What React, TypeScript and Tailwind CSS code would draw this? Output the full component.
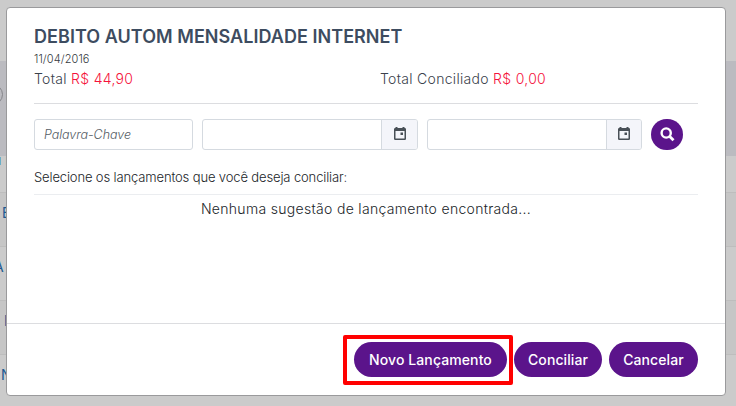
import React from "react";

const rows = [
  { text: "u r", className: "h-9 bg-[#cbcbcb] pb-[29px]", indent: "-ml-[7px]" },
  { text: "E", className: "h-[54px] bg-[#c6c6c6] border-t border-[#bdbdbd] pb-[14px]", indent: "pl-[2px]" },
  { text: "A", className: "h-[54px] bg-[#cbcbcb] border-t border-[#bdbdbd] pb-[14px]", indent: "-ml-[6px]" },
  { text: "F", className: "h-[54px] bg-[#c6c6c6] border-t border-[#bdbdbd] pb-[14px]", indent: "pl-1" },
  { text: "N", className: "h-[54px] bg-[#cbcbcb] border-t border-[#bdbdbd] pb-[14px]", indent: "pl-px" },
];

const Backdrop = () => (
  <div className="absolute inset-0 flex flex-col overflow-hidden bg-[#cbcbcb]">
    <div className="h-[61px] shrink-0" />
    <div className="flex h-[95px] shrink-0 items-center bg-[#bbbbc0]">
      <span className="-mt-7 -ml-[18px] size-[21px] shrink-0 rounded-full border border-[#85858a]" />
    </div>
    {rows.map((row) => (
      <div key={row.text} className={`flex shrink-0 items-center text-[14px] text-[#1c5a92] ${row.className}`}>
        <span className={row.indent}>{row.text}</span>
      </div>
    ))}
  </div>
);

const CalendarIcon = () => (
  <svg viewBox="0 0 12 13" className="h-[13px] w-3" fill="#495057">
    <path
      fillRule="evenodd"
      d="M1.500 0h2v1h5V0h2v1h.3A1.200 1.200 0 0 1 12 2.200v9.600a1.200 1.200 0 0 1-1.200 1.200H1.200A1.200 1.200 0 0 1 0 11.800V2.200A1.200 1.200 0 0 1 1.200 1h.3zM1.500 4v7.500h9V4z"
    />
    <path d="M6.500 5.500h2.500v2.500H6.500z" />
  </svg>
);

const SearchIcon = () => (
  <svg viewBox="0 0 15 15" className="size-[15px]" fill="none" stroke="#fff">
    <circle cx="6.200" cy="6" r="4.600" strokeWidth="2.400" />
    <path d="M9.500 9.200l4 4" strokeWidth="2.800" />
  </svg>
);

const DateInput = ({ className, addon }: { className: string; addon: string }) => (
  <div className={`flex h-[31px] overflow-hidden rounded-[3px] border border-[#d5dae0] ${className}`}>
    <input className="min-w-0 flex-1 outline-none" />
    <button className={`flex items-center justify-center border-l border-[#d5dae0] bg-[#f4f5fa] pb-0.5 ${addon}`}>
      <CalendarIcon />
    </button>
  </div>
);

const ActionButton = ({ children, className }: { children: React.ReactNode; className: string }) => (
  <button className={`h-[35px] shrink-0 rounded-full bg-[#5b148b] text-[14px] font-medium tracking-[0.1px] whitespace-nowrap text-white ${className}`}>
    {children}
  </button>
);

export default function App() {
  return (
    <div className="relative h-[406px] w-[736px] overflow-hidden font-['Inter',sans-serif]">
      <Backdrop />
      <div className="relative mt-[7px] ml-[6px] flex h-[389px] w-[720px] flex-col rounded-[4px] border border-[#9a9a9c] bg-white">
        <div className="flex-1 px-[27px] pt-[18px] text-[#464f5b]">
          <h1 className="text-[18px] leading-[22px] font-semibold tracking-[0.04px] text-[#3d4c60]">
            <span>DEBITO AUTOM MENSALIDADE INTERNET</span>
          </h1>
          <p className="mt-1 text-[11px] leading-[14px] font-light tracking-[0.1px] text-[#343a40]">
            <span>11/04/2016</span>
          </p>
          <div className="mt-[3px] flex text-[14px] leading-5 font-light tracking-[0.3px] text-[#3a414b]">
            <p className="w-[346px]">
              Total <span className="text-[#f5123b]">R$ 44,90</span>
            </p>
            <p>
              Total Conciliado <span className="text-[#f5123b]">R$ 0,00</span>
            </p>
          </div>
          <div className="mt-[14px] border-t border-[#dcdde0]" />
          <div className="mt-[15px] flex">
            <input
              placeholder="Palavra-Chave"
              className="h-[31px] w-[159px] rounded-[3px] border border-[#d5dae0] px-[9px] text-[12.5px] font-light tracking-[-0.05px] italic outline-none placeholder:text-[#555d65]"
            />
            <DateInput className="ml-[9px] w-[216px]" addon="w-9" />
            <DateInput className="ml-[9px] w-[215px]" addon="w-[35px]" />
            <button className="ml-[9px] flex h-[31px] w-8 items-center justify-center rounded-full bg-[#5b148b] pb-px">
              <SearchIcon />
            </button>
          </div>
          <p className="mt-[17px] text-[13px] leading-5 font-light tracking-[-0.13px] text-[#212529]">
            <span>Selecione os lançamentos que você deseja conciliar:</span>
          </p>
          <div className="mt-[7px] border-t border-[#ebedf0]" />
          <p className="mt-1 text-center text-[14px] leading-5 font-light tracking-[0.31px] text-[#212529]">
            <span>Nenhuma sugestão de lançamento encontrada...</span>
          </p>
        </div>
        <div className="flex h-[72px] justify-end border-t border-[#dcdde0] pt-[18px] pr-[27px]">
          <div className="relative">
            <ActionButton className="w-[153px]">Novo Lançamento</ActionButton>
            <div className="pointer-events-none absolute -top-[7px] -left-[11px] h-[50px] w-[170px] rounded-[2px] border-4 border-[#ff0000]" />
          </div>
          <ActionButton className="ml-[7px] w-[88px]">Conciliar</ActionButton>
          <ActionButton className="ml-[7px] w-[89px]">Cancelar</ActionButton>
        </div>
      </div>
    </div>
  );
}
